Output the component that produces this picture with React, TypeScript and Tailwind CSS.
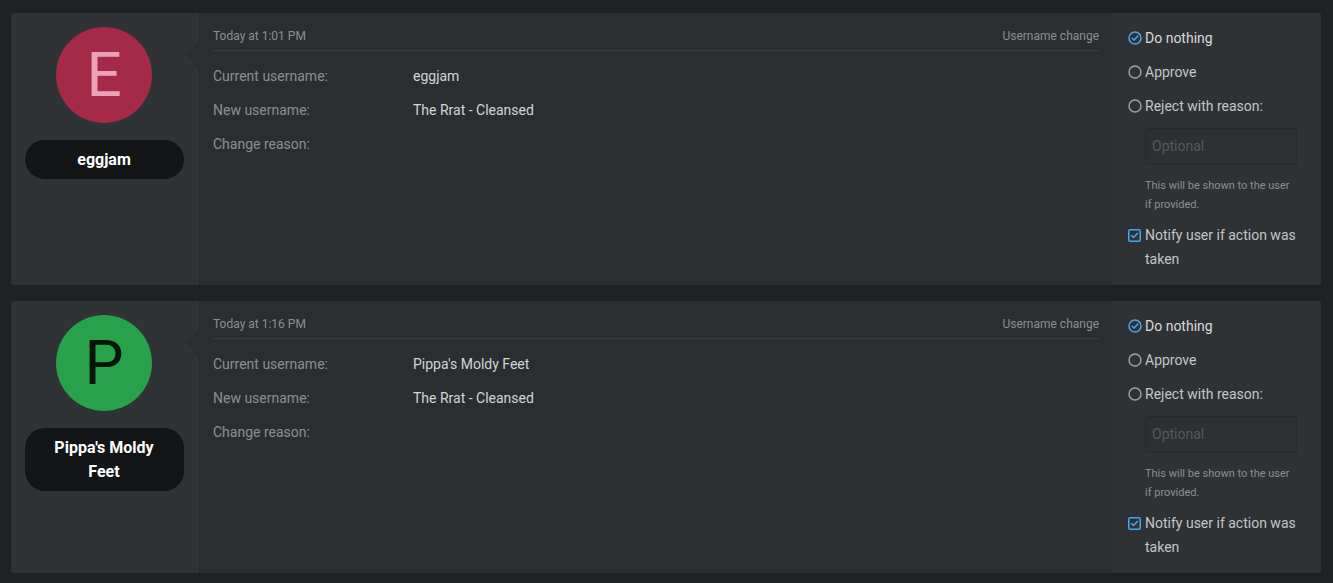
import React from 'react';

interface Item {
  letter: string;
  avatarBg: string;
  letterColor: string;
  name: string;
  time: string;
  current: string;
  next: string;
}

const items: Item[] = [
  { letter: 'E', avatarBg: 'bg-[#a52a48]', letterColor: 'text-[#eba2b6]', name: 'eggjam', time: 'Today at 1:01 PM', current: 'eggjam', next: 'The Rrat - Cleansed' },
  { letter: 'P', avatarBg: 'bg-[#28a24a]', letterColor: 'text-[#08140b]', name: "Pippa's Moldy Feet", time: 'Today at 1:16 PM', current: "Pippa's Moldy Feet", next: 'The Rrat - Cleansed' },
];

const RadioChecked = () => (
  <svg width="14" height="14" viewBox="0 0 14 14" className="shrink-0">
    <circle cx="7" cy="7" r="6" fill="none" stroke="#47a7eb" strokeWidth="1.5" />
    <path d="M4.2 7.2 L6.2 9.1 L9.9 5.1" fill="none" stroke="#47a7eb" strokeWidth="1.5" strokeLinecap="round" strokeLinejoin="round" />
  </svg>
);

const Radio = () => (
  <svg width="14" height="14" viewBox="0 0 14 14" className="shrink-0">
    <circle cx="7" cy="7" r="6" fill="none" stroke="#a0a3a6" strokeWidth="1.4" />
  </svg>
);

const Checkbox = () => (
  <svg width="13" height="13" viewBox="0 0 13 13" className="shrink-0">
    <rect x="0.75" y="0.75" width="11.5" height="11.5" rx="1.5" fill="none" stroke="#47a7eb" strokeWidth="1.5" />
    <path d="M3.4 6.6 L5.5 8.5 L9.4 4.4" fill="none" stroke="#47a7eb" strokeWidth="1.5" strokeLinecap="round" strokeLinejoin="round" />
  </svg>
);

const Row = ({ label, value }: { label: string; value?: string }) => (
  <div className="flex h-[34px] items-center text-[14px]">
    <div className="w-[200px] text-[#8b8e91]">{label}</div>
    <div className="text-[#d2d4d6]">{value}</div>
  </div>
);

const Card = ({ item }: { item: Item }) => (
  <div className="flex h-[272px] rounded-[3px] bg-[#2b2e31] overflow-hidden">
    {/* user column */}
    <div className="relative w-[187px] shrink-0 bg-[#303336] border-r border-[#35383b] flex flex-col items-center pt-[14px]">
      <div className={`w-[96px] h-[96px] rounded-full ${item.avatarBg} flex items-center justify-center`}>
        <span className={`text-[62px] leading-none ${item.letterColor}`}>{item.letter}</span>
      </div>
      <div className="mt-[17px] w-[159px] min-h-[39px] rounded-[20px] bg-[#141517] flex items-center justify-center px-[22px] py-[7.5px] text-center text-[16px] leading-[24px] font-bold text-white">
        {item.name}
      </div>
      <div className="absolute right-[-1px] top-[29px] w-0 h-0 border-y-[13px] border-y-transparent border-r-[12px] border-r-[#2b2e31]" />
    </div>

    {/* main */}
    <div className="flex-1 pl-[15px] pr-[14px] pt-[15px]">
      <div className="flex justify-between items-center border-b border-[#3a3d40] text-[12px] leading-[16px] text-[#8b8e91] pb-[6px]">
        <span>{item.time}</span>
        <span>Username change</span>
      </div>
      <div className="pt-[8px]">
        <Row label="Current username:" value={item.current} />
        <Row label="New username:" value={item.next} />
        <Row label="Change reason:" />
      </div>
    </div>

    {/* actions */}
    <div className="w-[208px] shrink-0 bg-[#2f3235] border-l border-[#35383b] pl-[14px] pr-[24px] pt-[12px] text-[14px] text-[#c3c5c7]">
      <div className="flex items-center gap-[3px] h-[26px] text-[#d8dadc]"><RadioChecked /><span>Do nothing</span></div>
      <div className="flex items-center gap-[3px] h-[26px] mt-[8px]"><Radio /><span>Approve</span></div>
      <div className="flex items-center gap-[3px] h-[26px] mt-[8px]"><Radio /><span>Reject with reason:</span></div>
      <div className="pl-[17px] mt-[9px]">
        <div className="h-[37px] rounded-[3px] bg-[#2d3033] border border-[#26292c] flex items-center px-[6px] text-[14px] text-[#55585b]">Optional</div>
        <div className="mt-[11px] text-[11px] leading-[19px] text-[#8b8e91]">This will be shown to the user if provided.</div>
      </div>
      <div className="flex gap-[4px] mt-[9px] leading-[24px]">
        <div className="pt-[6px]"><Checkbox /></div>
        <span>Notify user if action was taken</span>
      </div>
    </div>
  </div>
);

export default function App() {
  return (
    <div className="min-h-[583px] bg-[#1f2225] pl-[11px] pt-[13px] pr-[12px] flex flex-col gap-[16px]" style={{ fontFamily: 'Roboto, "Liberation Sans", sans-serif' }}>
      {items.map((item, i) => (
        <Card key={i} item={item} />
      ))}
    </div>
  );
}
